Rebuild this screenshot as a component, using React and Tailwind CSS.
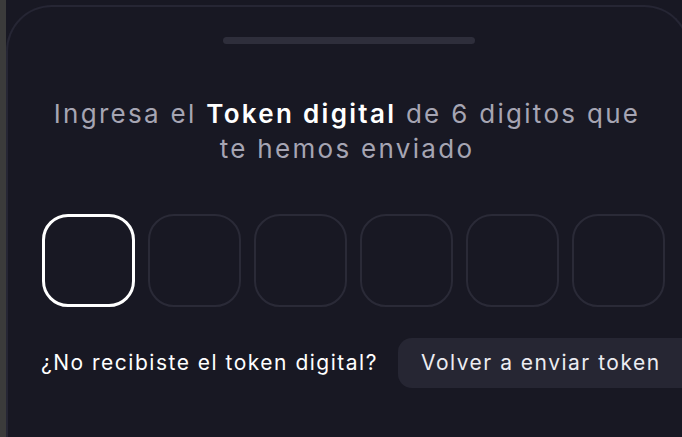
import React from 'react';

const TokenSheet = () => {
  const digits = [0, 1, 2, 3, 4, 5];

  return (
    <div className="w-[682px] h-[437px] flex bg-[#3b3b3b] overflow-hidden font-['Inter',_sans-serif]">
      <div className="w-[6px] shrink-0" />
      <div className="flex-1 bg-[#181823] pt-[5px] overflow-hidden">
        <div className="w-[684px] h-[440px] rounded-t-[46px] border-t-2 border-x-2 border-[#262634] bg-[#181823] flex flex-col">
          <div className="mt-[30px] ml-[215px] w-[252px] h-[7px] rounded-full bg-[#2e2e3b]" />

          <p className="mt-[52px] ml-[16px] w-[646px] text-center text-[26px] leading-[35px] text-[#a6a5b3] tracking-[2.3px]">
            Ingresa el <span className="font-semibold text-white">Token digital</span> de 6 digitos que
            <br />
            te hemos enviado
          </p>

          <div className="mt-[48px] ml-[34px] flex gap-[13px]">
            {digits.map((d) => (
              <div
                key={d}
                className={
                  d === 0
                    ? 'w-[93px] h-[93px] rounded-[26px] border-[3px] border-white'
                    : 'w-[93px] h-[93px] rounded-[26px] border-2 border-[#2a2a37]'
                }
              />
            ))}
          </div>

          <div className="mt-[31px] ml-[33px] flex items-center">
            <span className="shrink-0 w-[357px] text-[21px] tracking-[1.5px] text-white whitespace-nowrap">
              ¿No recibiste el token digital?
            </span>
            <button className="shrink-0 h-[50px] pl-[23px] pr-[40px] rounded-[14px] bg-[#262633] text-[21px] tracking-[1.5px] text-[#ececf1] whitespace-nowrap">
              Volver a enviar token
            </button>
          </div>
        </div>
      </div>
    </div>
  );
};

export default TokenSheet;
